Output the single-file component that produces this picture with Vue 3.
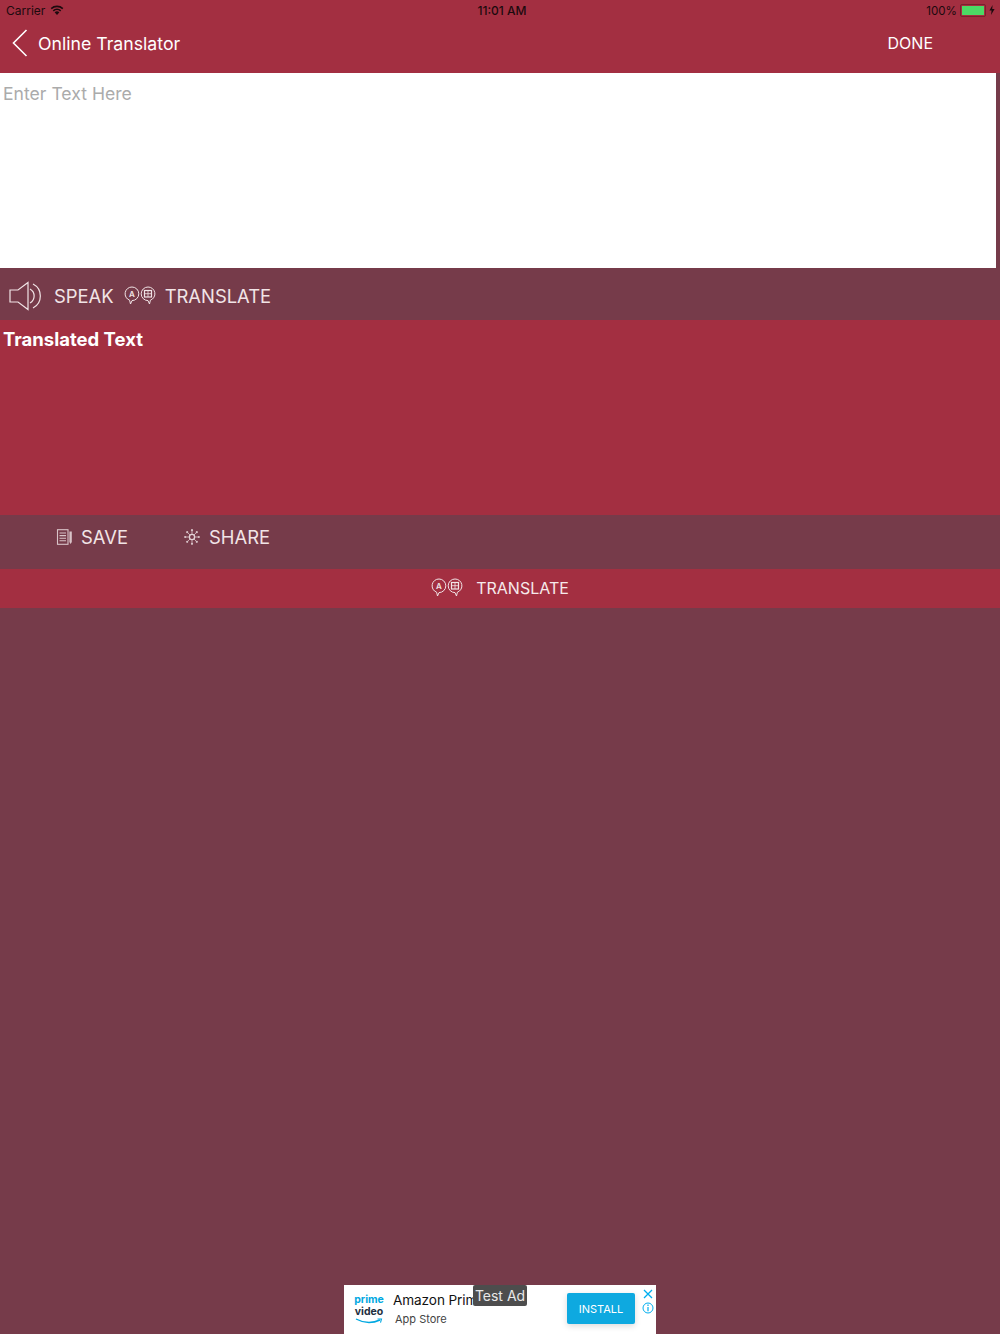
<template>
  <div class="page">
    <header class="top">
      <div class="status">
        <div class="status-left">
          <span>Carrier</span>
          <svg class="wifi" width="14" height="10" viewBox="0 0 14 10">
            <path d="M7 10 L4.6 7.2 A3.6 3.6 0 0 1 9.4 7.2 Z" fill="#1c0a0e" />
            <path d="M3.3 5.8 A5.6 5.6 0 0 1 10.7 5.8" fill="none" stroke="#1c0a0e" stroke-width="1.6" />
            <path d="M1.2 3.6 A8.6 8.6 0 0 1 12.8 3.6" fill="none" stroke="#1c0a0e" stroke-width="1.6" />
          </svg>
        </div>
        <span class="clock">11:01 AM</span>
        <div class="status-right">
          <span class="percent">100%</span>
          <span class="battery"><span class="battery-fill"></span></span>
          <svg width="6" height="10" viewBox="0 0 6 10">
            <path d="M3.6 0 L0.4 5.6 H2.6 L2 10 L5.6 4 H3.2 Z" fill="#1c0a0e" />
          </svg>
        </div>
      </div>
      <nav class="nav">
        <svg class="back" width="16" height="28" viewBox="0 0 16 28">
          <path d="M14.5 1 L1.5 14 L14.5 27" fill="none" stroke="#fff" stroke-width="1.6" />
        </svg>
        <span class="title">Online Translator</span>
        <span class="done">DONE</span>
      </nav>
    </header>

    <section class="input-wrap">
      <div class="input-box">Enter Text Here</div>
    </section>

    <div class="bar speak-bar">
      <svg class="speaker" width="33" height="30" viewBox="0 0 33 30">
        <path d="M1 9 H9 L19 1.5 V28.5 L9 21 H1 Z" fill="none" stroke="#f1e4e6" stroke-width="1.2" />
        <path d="M21 8 A8 8 0 0 1 21 22" fill="none" stroke="#f1e4e6" stroke-width="1.2" />
        <path d="M24 3 A13.5 13.5 0 0 1 24 27" fill="none" stroke="#f1e4e6" stroke-width="1.2" />
      </svg>
      <span class="bar-label speak-label">SPEAK</span>
      <svg class="lang" width="32" height="20" viewBox="0 0 32 20">
        <path d="M8 1 A6.8 6.8 0 0 1 8 14.6 L6.5 18 L5.6 14.2 A6.8 6.8 0 0 1 8 1 Z" fill="none" stroke="#f1e4e6" stroke-width="1" />
        <text x="8" y="11" class="lang-a">A</text>
        <path d="M24 1 A6.8 6.8 0 0 0 24 14.6 L25.5 18 L26.4 14.2 A6.8 6.8 0 0 0 24 1 Z" fill="none" stroke="#f1e4e6" stroke-width="1" />
        <rect x="20.5" y="4.5" width="7" height="6.5" fill="none" stroke="#f1e4e6" stroke-width="1.2" />
        <path d="M24 4.5 V11 M20.5 7.7 H27.5" stroke="#f1e4e6" stroke-width="0.8" />
      </svg>
      <span class="bar-label translate-label">TRANSLATE</span>
    </div>

    <section class="output">Translated Text</section>

    <div class="bar save-bar">
      <svg class="save-icon" width="17" height="16" viewBox="0 0 17 16">
        <rect x="1.5" y="0.7" width="10.5" height="14.6" fill="none" stroke="#d9c3c8" stroke-width="1.1" />
        <path d="M3.5 4 H10 M3.5 6.6 H10 M3.5 9.2 H10 M3.5 11.8 H10" stroke="#d9c3c8" stroke-width="1.1" />
        <path d="M13.4 2.5 H15.8 V13 L14.6 15 L13.4 13 Z" fill="#d9c3c8" />
      </svg>
      <span class="bar-label save-label">SAVE</span>
      <svg class="share-icon" width="16" height="16" viewBox="0 0 16 16">
        <g stroke="#cfb4ba" stroke-width="0.9">
          <path d="M8 0.8 V15.2 M0.8 8 H15.2 M2.9 2.9 L13.1 13.1 M13.1 2.9 L2.9 13.1" />
        </g>
        <g fill="#d9c3c8">
          <circle cx="8" cy="1.2" r="1.1" />
          <circle cx="8" cy="14.8" r="1.1" />
          <circle cx="1.2" cy="8" r="1.1" />
          <circle cx="14.8" cy="8" r="1.1" />
          <circle cx="3.2" cy="3.2" r="1.1" />
          <circle cx="12.8" cy="3.2" r="1.1" />
          <circle cx="3.2" cy="12.8" r="1.1" />
          <circle cx="12.8" cy="12.8" r="1.1" />
        </g>
        <circle cx="8" cy="8" r="2.6" fill="#763b4a" stroke="#e4d3d7" stroke-width="1.3" />
      </svg>
      <span class="bar-label share-label">SHARE</span>
    </div>

    <div class="translate-btn">
      <svg width="32" height="20" viewBox="0 0 32 20">
        <path d="M8 1 A6.8 6.8 0 0 1 8 14.6 L6.5 18 L5.6 14.2 A6.8 6.8 0 0 1 8 1 Z" fill="none" stroke="#f1e4e6" stroke-width="1" />
        <text x="8" y="11" class="lang-a">A</text>
        <path d="M24 1 A6.8 6.8 0 0 0 24 14.6 L25.5 18 L26.4 14.2 A6.8 6.8 0 0 0 24 1 Z" fill="none" stroke="#f1e4e6" stroke-width="1" />
        <rect x="20.5" y="4.5" width="7" height="6.5" fill="none" stroke="#f1e4e6" stroke-width="1.2" />
        <path d="M24 4.5 V11 M20.5 7.7 H27.5" stroke="#f1e4e6" stroke-width="0.8" />
      </svg>
      <span>TRANSLATE</span>
    </div>

    <aside class="ad">
      <div class="prime">
        <span class="prime-top">prime</span>
        <span class="prime-bottom">video</span>
        <svg width="28" height="7" viewBox="0 0 28 7">
          <path d="M1 1 Q13 7.5 25 2" fill="none" stroke="#00a8e1" stroke-width="1.4" />
          <path d="M22.5 1 L26.5 1 L25.5 4.6" fill="none" stroke="#00a8e1" stroke-width="1.1" />
        </svg>
      </div>
      <div class="ad-text">
        <span class="ad-name">Amazon Prim</span>
        <span class="ad-store">App Store</span>
      </div>
      <button class="install">INSTALL</button>
      <div class="ad-icons">
        <svg width="10" height="10" viewBox="0 0 10 10">
          <path d="M1 1 L9 9 M9 1 L1 9" stroke="#00aeef" stroke-width="1.3" />
        </svg>
        <svg width="12" height="12" viewBox="0 0 12 12">
          <circle cx="6" cy="6" r="5" fill="none" stroke="#00aeef" stroke-width="1" />
          <path d="M6 5 V9.3 M6 2.6 V4" stroke="#00aeef" stroke-width="1.2" />
        </svg>
      </div>
      <span class="test-ad">Test Ad</span>
    </aside>
  </div>
</template>

<script setup>
</script>

<style>
html, body {
  margin: 0;
  background: #763b4a;
}
</style>

<style scoped>
.page {
  width: 1000px;
  height: 1334px;
  display: flex;
  flex-direction: column;
  background: #763b4a;
  font-family: Inter, "Liberation Sans", sans-serif;
  overflow: hidden;
}

.top {
  height: 73px;
  background: #a32f41;
  display: flex;
  flex-direction: column;
}

.status {
  height: 20px;
  padding: 0 5px 0 6px;
  display: grid;
  grid-template-columns: 1fr auto 1fr;
  align-items: center;
  font-size: 12px;
  color: #1c0a0e;
}
.status-left {
  display: flex;
  align-items: center;
  gap: 5px;
}
.clock {
  font-weight: 500;
  padding-left: 3px;
}
.status-right {
  display: flex;
  align-items: center;
  justify-content: flex-end;
  gap: 3px;
}
.percent {
  font-size: 11.6px;
  margin-top: 1px;
}
.battery {
  width: 22px;
  height: 9px;
  margin-left: 0;
  border: 1px solid #7c1f2e;
  border-radius: 2px;
  padding: 1px;
  display: block;
}
.battery-fill {
  display: block;
  height: 100%;
  background: #4cd964;
}

.nav {
  flex: 1;
  display: flex;
  align-items: center;
  padding: 0 67px 7px 12px;
  color: #fff;
}
.back {
  margin-right: 10px;
}
.title {
  font-size: 17.7px;
  flex: 1;
}
.done {
  font-size: 16px;
}

.input-wrap {
  height: 195px;
  padding-right: 4px;
}
.input-box {
  height: 100%;
  background: #fff;
  color: #ababab;
  font-size: 17.6px;
  padding: 10px 3px;
  box-sizing: border-box;
}

.bar {
  display: flex;
  align-items: center;
  color: #f1e4e6;
}
.bar-label {
  font-size: 18.4px;
}
.speak-bar {
  height: 52px;
  box-sizing: border-box;
  padding: 4px 0 0 9px;
}
.speak-label {
  margin-left: 12px;
}
.lang {
  margin-left: 10px;
}
.translate-label {
  margin-left: 9px;
}

.output {
  height: 195px;
  box-sizing: border-box;
  background: #a32f41;
  color: #fff;
  font-size: 18.5px;
  font-weight: 700;
  padding: 8px 3px;
}

.save-bar {
  height: 54px;
  box-sizing: border-box;
  padding: 0 0 10px 56px;
}
.save-label {
  margin-left: 8px;
}
.share-icon {
  margin-left: 56px;
}
.share-label {
  margin-left: 9px;
}

.translate-btn {
  height: 39px;
  box-sizing: border-box;
  padding-bottom: 1px;
  background: #a32f41;
  color: #f6e9eb;
  font-size: 16px;
  display: flex;
  align-items: center;
  justify-content: center;
  gap: 13px;
}

.ad {
  position: relative;
  width: 312px;
  height: 49px;
  margin: auto auto 0;
  background: #fff;
  display: flex;
  align-items: center;
  box-sizing: border-box;
  padding-left: 10px;
  color: #111;
}
.prime {
  width: 30px;
  display: flex;
  flex-direction: column;
  align-items: center;
  font-weight: 700;
  line-height: 12px;
  font-size: 10.5px;
}
.prime-top {
  color: #00a8e1;
}
.prime-bottom {
  color: #232f3e;
}
.ad-text {
  margin: -2px 0 0 9px;
  width: 174px;
  display: flex;
  flex-direction: column;
  gap: 4px;
  overflow: hidden;
}
.ad-name {
  font-size: 13.6px;
  letter-spacing: -0.1px;
}
.ad-store {
  font-size: 11px;
  color: #444;
  margin-left: 2px;
}
.install {
  width: 68px;
  height: 31px;
  margin-top: -2px;
  border: 0;
  border-radius: 2px;
  background: #0ea9e0;
  color: #fff;
  font-family: inherit;
  font-size: 11px;
  padding: 0;
  box-shadow: 0 2px 6px rgba(0, 0, 0, 0.15);
}
.ad-icons {
  display: flex;
  flex-direction: column;
  align-items: center;
  gap: 3px;
  margin-left: 7px;
  margin-top: -17px;
}
.test-ad {
  position: absolute;
  left: 129px;
  top: 0;
  width: 54px;
  height: 21px;
  line-height: 21px;
  text-align: center;
  background: #4d4d4d;
  color: #e8e8e8;
  font-size: 14px;
  border-radius: 2px;
}
.lang-a {
  font-size: 8px;
  font-weight: 600;
  fill: #f1e4e6;
  text-anchor: middle;
}
</style>
